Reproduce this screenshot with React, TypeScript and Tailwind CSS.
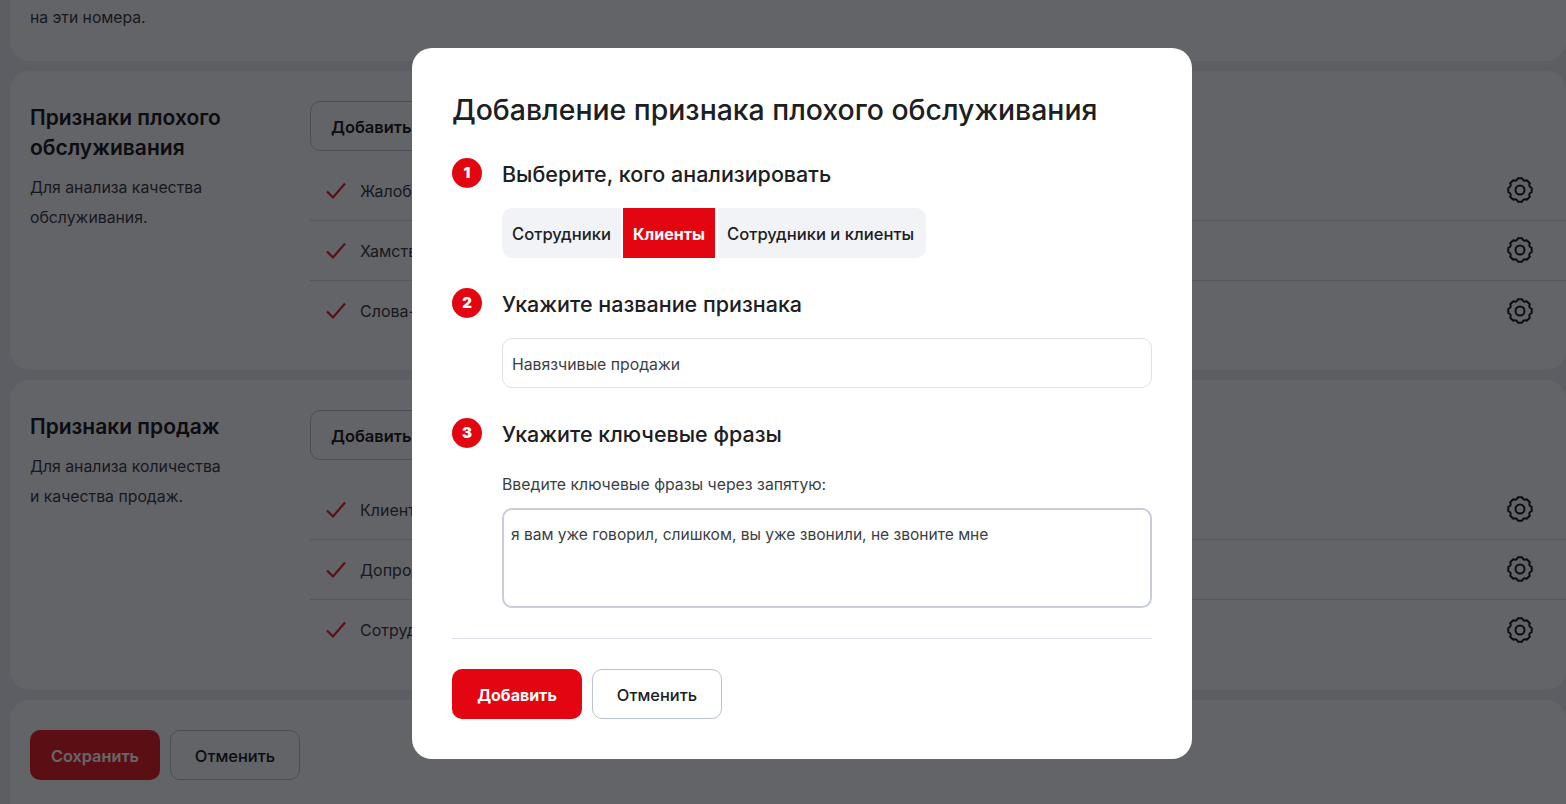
import React from 'react'

const font = { fontFamily: 'Inter, "Noto Sans", sans-serif' }

// Контур шестерёнки: 8 зубцов вокруг центра (14, 14)
const gearPath = (() => {
  const pt = (deg: number, r: number) => {
    const a = (deg * Math.PI) / 180
    return `${(14 + r * Math.cos(a)).toFixed(2)} ${(14 + r * Math.sin(a)).toFixed(2)}`
  }
  let d = `M${pt(-10.5, 11.9)}`
  for (let i = 0; i < 8; i++) {
    const t = i * 45
    d += ` L${pt(t + 10.5, 11.9)} Q${pt(t + 22.5, 8.9)} ${pt(t + 34.5, 11.9)}`
  }
  return d + 'Z'
})()

const GearIcon = () => (
  <svg width="28" height="28" viewBox="0 0 28 28" fill="none" stroke="currentColor" strokeWidth="2" strokeLinejoin="round">
    <path d={gearPath} />
    <circle cx="14" cy="14" r="4.5" />
  </svg>
)

const CheckIcon = () => (
  <svg width="20" height="18" viewBox="0 0 20 18" fill="none" stroke="#e3262e" strokeWidth="2.2" className="shrink-0">
    <path d="M1 9.5l6 6L19 1.5" />
  </svg>
)

function FeatureRow({ label, last }: { label: string; last?: boolean }) {
  return (
    <div className={`flex h-[60px] items-center pl-[16px] pr-[32px] ${last ? '' : 'border-b border-[#d9dbe1]'}`}>
      <CheckIcon />
      <span className="ml-[14px] text-[16px] text-[#3b3f45]">{label}</span>
      <span className="mb-[1px] ml-auto text-[#1d2023]">
        <GearIcon />
      </span>
    </div>
  )
}

function Section({ title, desc, rows, className, rowsClass }: { title: React.ReactNode; desc: React.ReactNode; rows: string[]; className: string; rowsClass: string }) {
  return (
    <section className={`flex rounded-[20px] bg-[#f8f9fd] pl-[20px] pt-[30px] ${className}`}>
      <div className="w-[280px] shrink-0">
        <h2 className="pt-[2px] text-[21px] leading-[30px] font-semibold text-[#1d2023]">{title}</h2>
        <p className="mt-[10px] text-[15.8px] leading-[30px] text-[#3b3f45]">{desc}</p>
      </div>
      <div className="flex-1">
        <button className="h-[50px] w-[130px] rounded-[10px] border border-[#bcc3d0] pl-[20px] pt-[2px] text-left text-[16.4px] font-semibold text-[#1d2023]">Добавить</button>
        <div className={rowsClass}>
          {rows.map((r, i) => (
            <FeatureRow key={r} label={r} last={i === rows.length - 1} />
          ))}
        </div>
      </div>
    </section>
  )
}

function Step({ n, title }: { n: number; title: string }) {
  return (
    <div className="flex h-[30px] items-center gap-[20px]">
      <span className="flex h-[30px] w-[30px] items-center justify-center rounded-full bg-[#e30611] text-[15px] font-black text-white">{n}</span>
      <h3 className="pt-[2px] text-[21.5px] leading-[30px] font-medium text-[#1d2023]">{title}</h3>
    </div>
  )
}

export default function App() {
  return (
    <div style={font} className="relative h-[804px] w-[1566px] overflow-hidden bg-[#e8eaf0]">
      <div className="flex flex-col gap-[10px] pl-[10px]">
        <section className="h-[61px] rounded-b-[20px] bg-[#f8f9fd] pl-[20px]">
          <p className="text-[15.7px] leading-[36px] text-[#3b3f45]">на эти номера.</p>
        </section>
        <Section
          className="h-[299px]"
          rowsClass="mt-[10px]"
          title={<>Признаки плохого<br />обслуживания</>}
          desc={<>Для анализа качества<br />обслуживания.</>}
          rows={['Жалобы', 'Хамство', 'Слова-паразиты']}
        />
        <Section
          className="h-[310px]"
          rowsClass="mt-[20px]"
          title="Признаки продаж"
          desc={<>Для анализа количества<br />и качества продаж.</>}
          rows={['Клиент', 'Допродажа', 'Сотрудник']}
        />
        <section className="flex h-[104px] gap-[10px] rounded-t-[20px] bg-[#f8f9fd] pl-[20px] pt-[30px]">
          <button className="h-[50px] w-[130px] rounded-[10px] bg-[#e3262e] pt-[2px] text-[16.3px] font-semibold text-white">Сохранить</button>
          <button className="h-[50px] w-[130px] rounded-[10px] border border-[#bcc3d0] pt-[2px] text-[16.4px] font-medium text-[#1d2023]">Отменить</button>
        </section>
      </div>

      <div className="absolute inset-0 bg-[#000005]/60" />

      <div className="absolute left-[412px] top-[48px] h-[711px] w-[780px] rounded-[20px] bg-white px-[40px] pt-[40px]">
        <h1 className="text-[28.4px] leading-[44px] font-medium text-[#1d2023]">Добавление признака плохого обслуживания</h1>

        <div className="mt-[26px]"><Step n={1} title="Выберите, кого анализировать" /></div>
        <div className="mt-[20px] ml-[50px] flex h-[50px] gap-[2px] text-[16.6px] font-medium text-[#1d2023]">
          <span className="flex w-[119px] items-center rounded-l-[10px] bg-[#f2f3f7] pl-[10px] pt-[2px]">Сотрудники</span>
          <span className="flex w-[92px] items-center justify-center bg-[#e30611] pt-[2px] text-[16px] font-bold text-white">Клиенты</span>
          <span className="ml-[1px] flex w-[208px] items-center rounded-r-[10px] bg-[#f2f3f7] pl-[9px] pt-[2px]">Сотрудники и клиенты</span>
        </div>

        <div className="mt-[30px]"><Step n={2} title="Укажите название признака" /></div>
        <div className="mt-[20px] ml-[50px] flex h-[50px] items-center rounded-[10px] border border-[#dfe2ea] px-[9px] pt-[4px] text-[15.8px] text-[#3b3f45]">Навязчивые продажи</div>

        <div className="mt-[30px]"><Step n={3} title="Укажите ключевые фразы" /></div>
        <p className="mt-[25px] ml-[50px] text-[15.8px] leading-[24px] text-[#3b3f45]">Введите ключевые фразы через запятую:</p>
        <div className="mt-[11px] ml-[50px] h-[100px] rounded-[10px] border-2 border-[#c9cdd5] px-[7px] pt-[13px] text-[15.55px] leading-[24px] text-[#3b3f45]">я вам уже говорил, слишком, вы уже звонили, не звоните мне</div>

        <div className="mt-[30px] flex gap-[10px] border-t border-[#dfe2ea] pt-[30px]">
          <button className="h-[50px] w-[130px] rounded-[10px] bg-[#e30611] pt-[2px] text-[16px] font-bold text-white">Добавить</button>
          <button className="h-[50px] w-[130px] rounded-[10px] border border-[#bcc3d0] pt-[2px] text-[16.4px] font-medium text-[#1d2023]">Отменить</button>
        </div>
      </div>
    </div>
  )
}
